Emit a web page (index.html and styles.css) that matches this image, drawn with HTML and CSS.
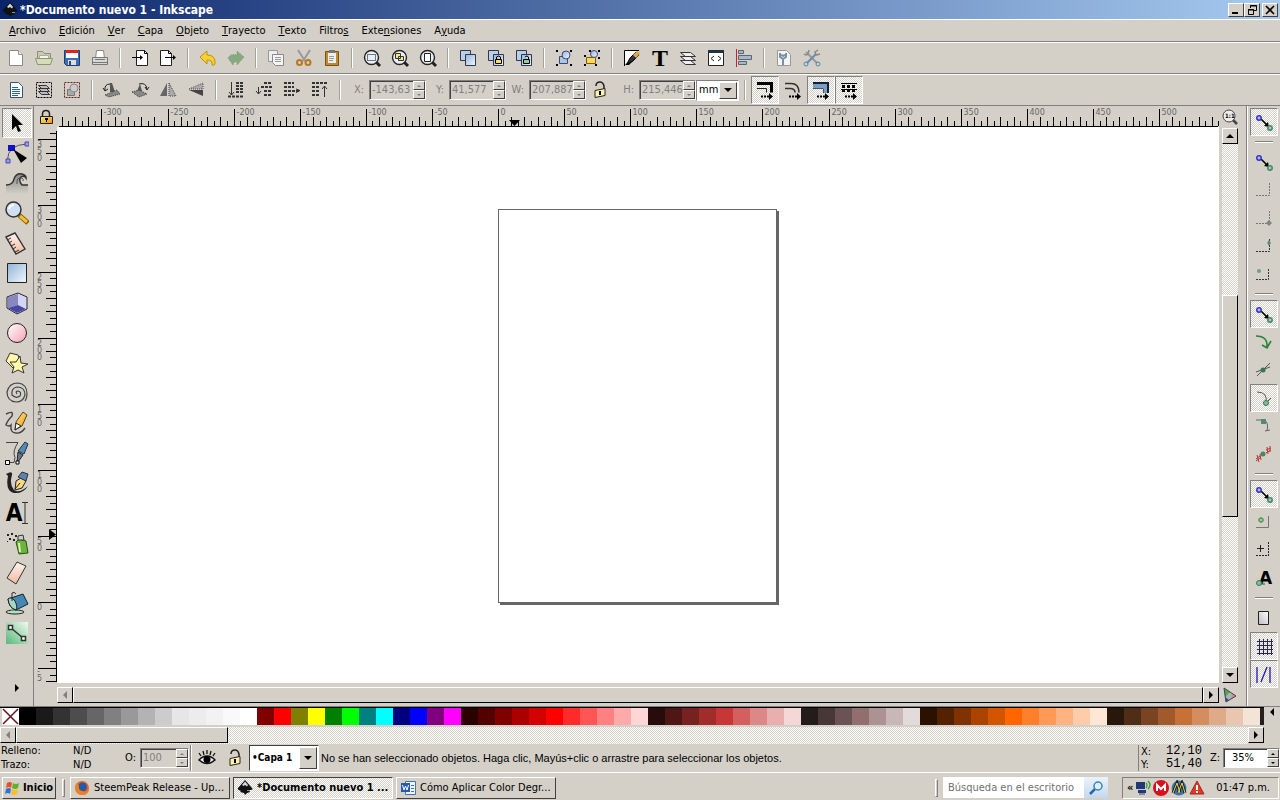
FILE: index.html
```
<!DOCTYPE html>
<html lang="es">
<head>
    <meta charset="UTF-8">
    <meta name="viewport" content="width=device-width, initial-scale=1.0">
    <title>*Documento nuevo 1 - Inkscape</title>
    <link rel="stylesheet" href="styles.css">
</head>
<body>

    <!-- shared icons -->
    <svg class="sprite" width="0" height="0">
        <defs>
            <linearGradient id="blue" x1="0" y1="0" x2="1" y2="1"><stop offset="0" stop-color="#8fb4d4"/><stop offset="1" stop-color="#f2f8ff"/></linearGradient>
            <linearGradient id="pink" x1="0" y1="0" x2="1" y2="1"><stop offset="0" stop-color="#fff"/><stop offset="1" stop-color="#f5a0b4"/></linearGradient>
            <linearGradient id="skin" x1="0" y1="0" x2="0" y2="1"><stop offset="0" stop-color="#fff4ee"/><stop offset="1" stop-color="#f0b8a0"/></linearGradient>
            <linearGradient id="green" x1="0" y1="1" x2="1" y2="0"><stop offset="0" stop-color="#58b878"/><stop offset="1" stop-color="#f0faf0"/></linearGradient>
            <linearGradient id="gold" x1="0" y1="0" x2="1" y2="1"><stop offset="0" stop-color="#fff080"/><stop offset="1" stop-color="#f08c10"/></linearGradient>
            <linearGradient id="fade" x1="0" y1="0" x2="0" y2="1"><stop offset="0" stop-color="#888"/><stop offset="1" stop-color="#d4d0c8"/></linearGradient>
            <linearGradient id="paper" x1="1" y1="0" x2="0" y2="1"><stop offset="0" stop-color="#fff"/><stop offset="1" stop-color="#bbb"/></linearGradient>
        </defs>
        <symbol id="up" viewBox="0 0 8 8"><path d="M0 6h8L4 2z"/></symbol>
        <symbol id="down" viewBox="0 0 8 8"><path d="M0 2h8L4 6z"/></symbol>
        <symbol id="left" viewBox="0 0 8 8"><path d="M6 0v8L2 4z"/></symbol>
        <symbol id="right" viewBox="0 0 8 8"><path d="M2 0v8l4-4z"/></symbol>
        <symbol id="inkscape" viewBox="0 0 16 16">
            <path d="M8 0L1 8q-1 2 3 3l-1 1 4 1 1 2 2-2 3-1-1-2q5 0 3-2z" fill="#111"/>
            <path d="M8 1.500L5 5l1.500 1L8 5l2 1.500L11 5z" fill="#cfd8e6"/>
            <path d="M10 10h3v1h-3z" fill="#8a93a0"/>
        </symbol>
        <symbol id="snap" viewBox="0 0 24 24">
            <path d="M9 9l6 6" stroke="#000" stroke-width="1.600"/><path d="M17 17l-5-1 4-4z"/>
            <circle cx="7" cy="8" r="2.200" fill="#b8b8f8" stroke="#33c" stroke-width="1.500"/>
            <circle cx="18" cy="18" r="2.200" fill="#a8c8b0" stroke="#486" stroke-width="1.500"/>
        </symbol>
        <symbol id="openlock" viewBox="0 0 24 24">
            <path d="M16 11V8q-1-4-4-4-4 0-4 4" fill="none" stroke="#222" stroke-width="1.500"/>
            <path d="M7 12.500l10-2v7l-10 2z" fill="#fff3a8" stroke="#222"/><path d="M11 13h2v4h-2z"/>
        </symbol>
        <symbol id="lens" viewBox="0 0 24 24">
            <path d="M16 16l4 4" stroke="#222" stroke-width="3"/><circle cx="11.500" cy="11.500" r="7" fill="#e8eef5" stroke="#222" stroke-width="1.400"/>
        </symbol>
        <symbol id="squares" viewBox="0 0 24 24">
            <path d="M4.500 4.500h10v10h-10z" fill="#b8d0e4" stroke="#335"/><path d="M9.500 8.500h10v11h-10z" fill="url(#blue)" stroke="#335"/>
        </symbol>
        <symbol id="dash-arrow" viewBox="0 0 24 24">
            <path d="M8 18.500h8" stroke="#000" stroke-dasharray="2 1" stroke-width="2"/><path d="M16 15l4 3.500-4 3.500z"/>
        </symbol>
    </svg>

    <header class="titlebar">
        <svg class="icon-16"><use href="#inkscape"/></svg>
        <h1>*Documento nuevo 1 - Inkscape</h1>
        <div class="window-buttons">
            <button aria-label="Minimizar"><svg width="12" height="10"><path d="M2 7h6v2H2z"/></svg></button>
            <button aria-label="Restaurar"><svg width="12" height="10" fill="none" stroke="#000"><path d="M4.500 3V.5h6v5H8M4 1h7M2.500 4.500h5v5h-5zM2 5h6"/></svg></button>
            <button class="close" aria-label="Cerrar"><svg width="12" height="10"><path d="M2 1l8 8M10 1L2 9" stroke="#000" stroke-width="1.600"/></svg></button>
        </div>
    </header>

    <nav class="menubar">
        <button><u>A</u>rchivo</button>
        <button><u>E</u>dición</button>
        <button><u>V</u>er</button>
        <button><u>C</u>apa</button>
        <button><u>O</u>bjeto</button>
        <button><u>T</u>rayecto</button>
        <button><u>T</u>exto</button>
        <button>Filtro<u>s</u></button>
        <button>Exte<u>n</u>siones</button>
        <button>A<u>y</u>uda</button>
    </nav>

    <div class="toolbar">
        <button class="tool" aria-label="Nuevo"><svg viewBox="0 0 24 24"><path d="M5.500 4.500h9l4 4v11h-13z" fill="#fff" stroke="#888"/><path d="M14.500 4.500v4h4" fill="#eee" stroke="#999"/></svg></button>
        <button class="tool" aria-label="Abrir"><svg viewBox="0 0 24 24"><path d="M5.500 18.500v-13h5l2 2h6v11z" fill="#c8ccaa" stroke="#8a9070"/><path d="M7.500 9.500h9v5h-9z" fill="#f4f4ee" stroke="#aaa"/><path d="M3.500 12.500h17l-2 6h-13z" fill="#d4dcb8" stroke="#8a9a70"/></svg></button>
        <button class="tool" aria-label="Guardar"><svg viewBox="0 0 24 24"><path d="M4.500 4.500h15v15h-13l-2-2z" fill="#3c6eb0" stroke="#1c3e70"/><path d="M6 4h12v3H6z" fill="#d22"/><path d="M6 7h12v5H6z" fill="#fff"/><path d="M8 14h8v5H8z" fill="#ddd"/><path d="M9 15h2v4H9z" fill="#347"/></svg></button>
        <button class="tool" aria-label="Imprimir"><svg viewBox="0 0 24 24"><path d="M7.500 12.500l1-8h7l1 8" fill="#fff" stroke="#888"/><path d="M4.500 11.500h15v7h-15z" fill="#d8d8d4" stroke="#777"/><path d="M7 13.500h10M5 16.500h14" stroke="#777"/></svg></button>
        <span class="sep"></span>
        <button class="tool" aria-label="Importar"><svg viewBox="0 0 24 24"><path d="M8.500 4.500h8l3 3v12h-11z" fill="#fff" stroke="#222"/><path d="M16.500 4.500v3h3M4 11.500h9" fill="none" stroke="#000"/><path d="M12 9l3 2.500-3 2.500z"/></svg></button>
        <button class="tool" aria-label="Exportar"><svg viewBox="0 0 24 24"><path d="M4.500 4.500h8l3 3v12h-11z" fill="#fff" stroke="#222"/><path d="M12.500 4.500v3h3M9 11.500h8" fill="none" stroke="#000"/><path d="M17 9l3 2.500-3 2.500z"/></svg></button>
        <span class="sep"></span>
        <button class="tool" aria-label="Deshacer"><svg viewBox="0 0 24 24"><path d="M4 11l7-6v4q9 0 8 9-1 2-3 1 1-5-5-5v4z" fill="#f4d030" stroke="#c09010"/></svg></button>
        <button class="tool" aria-label="Rehacer" disabled><svg viewBox="0 0 24 24"><path d="M20 11l-7-6v4q-6-2-9 3l5 7q1-4 4-3v3z" fill="#88a880" stroke="#7aa070" stroke-dasharray="1 1"/></svg></button>
        <span class="sep"></span>
        <button class="tool" aria-label="Copiar" disabled><svg viewBox="0 0 24 24"><path d="M4.500 4.500h9v11h-9z" fill="#eee" stroke="#999"/><path d="M8.500 8.500h11v11h-8l-3-3z" fill="#f4f4f4" stroke="#888"/><path d="M11 11.500h6M11 13.500h6M11 15.500h6" stroke="#999"/></svg></button>
        <button class="tool" aria-label="Cortar"><svg viewBox="0 0 24 24" fill="none"><path d="M6 4l7 11M18 4l-7 11" stroke="#999" stroke-width="2"/><circle cx="7.500" cy="16.500" r="2.500" stroke="#b87820" stroke-width="2"/><circle cx="16" cy="16.500" r="2.500" stroke="#b87820" stroke-width="2"/></svg></button>
        <button class="tool" aria-label="Pegar"><svg viewBox="0 0 24 24"><path d="M5.500 5.500h13v14h-13z" fill="#c08830" stroke="#805010"/><path d="M8 7h8v10H8z" fill="#eee"/><path d="M9 4h6v3H9z" fill="#777"/><path d="M9 10.500h5M9 12.500h5M9 14.500h4" stroke="#999"/></svg></button>
        <span class="sep"></span>
        <button class="tool" aria-label="Zoom a selección"><svg viewBox="0 0 24 24"><use href="#lens"/><path d="M7.500 8.500h8v6h-8z" fill="none" stroke="#000" stroke-dasharray="1 1"/></svg></button>
        <button class="tool" aria-label="Zoom a dibujo"><svg viewBox="0 0 24 24"><use href="#lens"/><path d="M7.500 7.500h5v5h-5zM10.500 10.500h5v4h-5z" fill="#f8e480" stroke="#333"/></svg></button>
        <button class="tool" aria-label="Zoom a página"><svg viewBox="0 0 24 24"><use href="#lens"/><path d="M8.500 7.500h6v8h-6z" fill="#fff" stroke="#222"/></svg></button>
        <span class="sep"></span>
        <button class="tool" aria-label="Duplicar"><svg viewBox="0 0 24 24"><use href="#squares"/></svg></button>
        <button class="tool" aria-label="Clonar"><svg viewBox="0 0 24 24"><use href="#squares"/><path d="M12.500 13v-2q2-2 4 0v2" fill="none" stroke="#000"/><path d="M11.500 13.500h6v4h-6z" fill="#fce050" stroke="#000"/></svg></button>
        <button class="tool" aria-label="Desconectar clon"><svg viewBox="0 0 24 24"><use href="#squares"/><path d="M13 11q2-2 3.500 0v2" fill="none" stroke="#000"/><path d="M11.500 13.500h6v4h-6z" fill="#9c9" stroke="#000"/></svg></button>
        <span class="sep"></span>
        <button class="tool" aria-label="Agrupar"><svg viewBox="0 0 24 24"><path d="M7.500 10.500h8v7h-8z" fill="#aac8e0" stroke="#447"/><circle cx="14" cy="9" r="4" fill="url(#blue)" stroke="#447"/><path d="M4 4h2v2H4zM18 4h2v2h-2zM4 18h2v2H4zM18 18h2v2h-2z"/></svg></button>
        <button class="tool" aria-label="Desagrupar"><svg viewBox="0 0 24 24"><path d="M6.500 11.500h9v6h-9z" fill="#fcd860" stroke="#850"/><circle cx="14" cy="8" r="3.500" fill="url(#blue)" stroke="#447"/><path d="M4 9h2v2H4zM4 18h2v2H4zM15 18h2v2h-2zM9 4h2v2H9zM18 4h2v2h-2zM18 11h2v2h-2z"/></svg></button>
        <span class="sep"></span>
        <button class="tool" aria-label="Relleno y borde"><svg viewBox="0 0 24 24"><path d="M4 4h15L4 19z" fill="#fff"/><path d="M5 19L19 6v3L9 19z"/><path d="M4.500 20V4.500H19" fill="none" stroke="#000"/><path d="M7 18l3-6 6-6 3 2-6 7z" fill="#333" stroke="#000"/><path d="M13 9l4-4 3 2-4 5z" fill="#e0a850"/></svg></button>
        <button class="tool" aria-label="Texto"><span class="letter-t">T</span></button>
        <button class="tool" aria-label="Capas"><svg viewBox="0 0 24 24" fill="#eee" stroke="#333"><path d="M4.500 14.500h10l5 4h-10zM4.500 10.500h10l5 4h-10zM4.500 6.500h10l5 4h-10z"/></svg></button>
        <button class="tool" aria-label="Editor XML"><svg viewBox="0 0 24 24"><path d="M4.500 4.500h15v15h-15z" fill="#fff" stroke="#222"/><path d="M4 4h16v3H4z" fill="#234"/><path d="M10 10l-3 2.500 3 2.500M14 10l3 2.500-3 2.500" fill="none" stroke="#222"/></svg></button>
        <button class="tool" aria-label="Alinear"><svg viewBox="0 0 24 24"><path d="M4.500 3v18" stroke="#c22"/><path d="M6.500 4.500h5v3h-5zM6.500 9.500h13v4h-13zM6.500 15.500h8v3h-8z" fill="#a8b8c8" stroke="#567"/></svg></button>
        <span class="sep"></span>
        <button class="tool" aria-label="Propiedades del documento"><svg viewBox="0 0 24 24"><path d="M5.500 4.500h9l4 4v11h-13z" fill="#f4f4f4" stroke="#999"/><path d="M8 7v4l3 2v6M14 7v4l-3 2M9 9l2 1 2-1" fill="none" stroke="#7890a8" stroke-width="2"/></svg></button>
        <button class="tool" aria-label="Preferencias"><svg viewBox="0 0 24 24" fill="none"><path d="M6 6l11 11" stroke="#999" stroke-width="2"/><path d="M16 8L7 17" stroke="#678cb0" stroke-width="2"/><path d="M18 4l-3 2 1 3 4-1" stroke="#888" stroke-width="1.500"/><circle cx="6" cy="18" r="2" stroke="#58a"/><circle cx="18" cy="18" r="2" stroke="#58a"/><path d="M4 8q4 3 5-4" stroke="#888" stroke-width="1.500"/></svg></button>
    </div>

    <div class="toolbar options">
        <button class="tool" aria-label="Seleccionar todo"><svg viewBox="0 0 24 24"><path d="M6.500 4.500h8l4 4v11h-12z" fill="#fff" stroke="#357"/><path d="M8 9.500h6M8 11.500h8M8 13.500h8M8 15.500h8M8 17.500h6" stroke="#2860b0"/></svg></button>
        <button class="tool" aria-label="Seleccionar en capas"><svg viewBox="0 0 24 24"><path d="M4.500 4.500h15v15h-15z" fill="none" stroke="#000" stroke-dasharray="2 1"/><path d="M6.500 13.500h8l3 3h-8zM6.500 10.500h8l3 3h-8zM6.500 7.500h8l3 3h-8z" fill="#bbb" stroke="#333"/></svg></button>
        <button class="tool" aria-label="Deseleccionar" disabled><svg viewBox="0 0 24 24"><path d="M4.500 4.500h15v15h-15z" fill="none" stroke="#622" stroke-dasharray="2 1"/><path d="M7.500 11.500h7v6h-7z" fill="#aaa" stroke="#777"/><circle cx="14" cy="10" r="4" fill="#ccc" stroke="#888"/></svg></button>
        <span class="sep"></span>
        <button class="tool" aria-label="Rotar a la izquierda" disabled><svg viewBox="0 0 24 24"><path d="M5 13q-1-7 5-7M3 10l2 3 3-2" fill="none" stroke="#222"/><path d="M10 5l2 0 3 9h-5z" fill="#555"/><path d="M5 17l12-5 3 4-11 3z" fill="#888" stroke="#333" stroke-dasharray="1 1"/></svg></button>
        <button class="tool" aria-label="Rotar a la derecha" disabled><svg viewBox="0 0 24 24"><path d="M11 6q7-2 8 5M17 9l2 3 2-3" fill="none" stroke="#222"/><path d="M12 6L9 13h5z" fill="#555"/><path d="M4 14l7-2 8 4-8 3z" fill="#888" stroke="#333" stroke-dasharray="1 1"/></svg></button>
        <button class="tool" aria-label="Reflejar horizontal" disabled><svg viewBox="0 0 24 24"><path d="M11 5v13H4z" fill="#666"/><path d="M13 5v13h7z" fill="#aaa" stroke="#444" stroke-dasharray="1 1"/></svg></button>
        <button class="tool" aria-label="Reflejar vertical" disabled><svg viewBox="0 0 24 24"><path d="M5 11h14V5z" fill="#aaa" stroke="#555" stroke-dasharray="1 1"/><path d="M5 12h14v6z" fill="#444"/></svg></button>
        <span class="sep"></span>
        <button class="tool" aria-label="Bajar al fondo" disabled><svg viewBox="0 0 24 24" fill="none" stroke="#333"><path d="M7.500 4v13M5 14l2.500 3 2.500-3"/><path d="M12 5h8M12 8h8M12 11h8M12 14h8M4 18.500h16" stroke-width="2" stroke-dasharray="3 1"/></svg></button>
        <button class="tool" aria-label="Bajar" disabled><svg viewBox="0 0 24 24" fill="none" stroke="#333"><path d="M6.500 9v7M4 13l2.500 3 2.500-3"/><path d="M12 5h8M9 9h11M12 13h8M12 17h8" stroke-width="2" stroke-dasharray="3 1"/></svg></button>
        <button class="tool" aria-label="Elevar" disabled><svg viewBox="0 0 24 24" fill="none" stroke="#333"><path d="M16 11l4 1.500-4 2"/><path d="M4 5h10M4 9h10M4 13h15M4 17h10" stroke-width="2" stroke-dasharray="3 1"/></svg></button>
        <button class="tool" aria-label="Elevar al frente" disabled><svg viewBox="0 0 24 24" fill="none" stroke="#333"><path d="M16.500 19V8M14 11l2.500-3 2.500 3"/><path d="M4 5h16M4 9h8M4 13h8M4 17h8" stroke-width="2" stroke-dasharray="3 1"/></svg></button>
        <span class="sep"></span>

        <div class="field off">
            <label for="pos-x">X:</label>
            <div class="spin"><input id="pos-x" type="text" value="-143,63" disabled><span class="arrows"><button disabled aria-label="Más"><svg><use href="#up"/></svg></button><button disabled aria-label="Menos"><svg><use href="#down"/></svg></button></span></div>
        </div>
        <div class="field off">
            <label for="pos-y">Y:</label>
            <div class="spin"><input id="pos-y" type="text" value="41,577" disabled><span class="arrows"><button disabled aria-label="Más"><svg><use href="#up"/></svg></button><button disabled aria-label="Menos"><svg><use href="#down"/></svg></button></span></div>
        </div>
        <div class="field off">
            <label for="width">W:</label>
            <div class="spin"><input id="width" type="text" value="207,887" disabled><span class="arrows"><button disabled aria-label="Más"><svg><use href="#up"/></svg></button><button disabled aria-label="Menos"><svg><use href="#down"/></svg></button></span></div>
        </div>
        <button class="tool" aria-label="Bloquear proporción"><svg viewBox="0 0 24 24"><use href="#openlock"/></svg></button>
        <div class="field off last">
            <label for="height">H:</label>
            <div class="spin"><input id="height" type="text" value="215,446" disabled><span class="arrows"><button disabled aria-label="Más"><svg><use href="#up"/></svg></button><button disabled aria-label="Menos"><svg><use href="#down"/></svg></button></span></div>
        </div>
        <div class="combo units">
            <select aria-label="Unidad"><option>mm</option><option>px</option></select>
            <span class="combo-arrow"><svg><use href="#down"/></svg></span>
        </div>
        <span class="sep"></span>
        <button class="tool pressed" aria-label="Escalar borde"><svg viewBox="0 0 24 24"><path d="M4 5.500h14.500v9" fill="none" stroke="#000" stroke-width="3"/><path d="M4 10.500h9.500v4" fill="none" stroke="#222"/><use href="#dash-arrow"/></svg></button>
        <button class="tool" aria-label="Escalar esquinas"><svg viewBox="0 0 24 24"><path d="M4 5.500h6q8 0 8 9M4 10.500h5q5 0 5 4" fill="none" stroke="#333" stroke-width="1.600"/><use href="#dash-arrow"/></svg></button>
        <button class="tool pressed" aria-label="Mover degradados"><svg viewBox="0 0 24 24"><path d="M4 5h16v10h-5v-5H4z" fill="#7c9cc4"/><path d="M4 5h15v10" fill="none" stroke="#123" stroke-width="2"/><path d="M4 10.500h10.500V15" fill="none" stroke="#456"/><use href="#dash-arrow"/></svg></button>
        <button class="tool pressed" aria-label="Mover patrones"><svg viewBox="0 0 24 24"><path d="M4 5.500h16M4 11.500h16" stroke="#000"/><path d="M5 8.500h15M5 12.500h15" stroke="#000" stroke-width="3" stroke-dasharray="3 2"/><use href="#dash-arrow"/></svg></button>
    </div>

    <main class="workspace">
        <div class="toolbox">
            <button class="pressed" aria-label="Seleccionar"><svg viewBox="0 0 24 24"><path d="M7 3v16l4-4 2 6 3-1-3-6h5z"/></svg></button>
            <button aria-label="Nodos"><svg viewBox="0 0 24 24"><path d="M2.500 19q0-15 19-16" fill="none" stroke="#555"/><path d="M1 18h4v4H1zM20 1h4v4h-4z" fill="#99f" stroke="#44a"/><path d="M3 4h7v6H3z" fill="#11c"/><path d="M8 8l14 9-6 5z"/></svg></button>
            <button aria-label="Retocar"><svg viewBox="0 0 24 24"><path d="M1 14q7 0 8-6 2-6 8-5 4 1 4 4-2-3-5-1-3 3 1 8h6v9H1z" fill="url(#fade)"/><path d="M1 14q7 0 8-6 2-6 8-5 4 1 4 4-2-3-5-1-3 3 1 8h6" fill="none" stroke="#333" stroke-width="1.500"/><path d="M12 13q-1-7 5-6 2 1 1 3" fill="none" stroke="#555"/></svg></button>
            <button aria-label="Zoom"><svg viewBox="0 0 24 24"><path d="M14 14l9 8" stroke="#8a5a00" stroke-width="5"/><path d="M15 15l7 6" stroke="#f4c030" stroke-width="3"/><circle cx="8.500" cy="8.500" r="7.500" fill="#cfe0f2" stroke="#333" stroke-width="1.500"/><path d="M4 8q1-4 5-4" stroke="#fff" fill="none" stroke-width="2"/></svg></button>
            <button aria-label="Medir"><svg viewBox="0 0 24 24"><path d="M1 6l9-4 10 16-9 5z" fill="url(#skin)" stroke="#333" stroke-width="1.400"/><path d="M2 9l4-2M4 12l3-2M6 15l4-2M8 18l3-2M10 21l4-2" stroke="#333"/></svg></button>
            <button aria-label="Rectángulo"><svg viewBox="0 0 24 24"><path d="M2.500 2.500h19v19h-19z" fill="url(#blue)" stroke="#222"/></svg></button>
            <button aria-label="Caja 3D"><svg viewBox="0 0 24 24"><path d="M2 6l11-4 9 4v12l-10 5-10-6z" fill="#e0e0f8" stroke="#223"/><path d="M3 6l10-3v11L3 17z" fill="#8888c0"/><path d="M13 3l8 4v10l-8-3z" fill="#d4d4f4"/><path d="M3 17l10-3 8 4-9 4z" fill="#4848a0"/></svg></button>
            <button aria-label="Elipse"><svg viewBox="0 0 24 24"><circle cx="12" cy="12" r="9.500" fill="url(#pink)" stroke="#222"/></svg></button>
            <button aria-label="Estrella"><svg viewBox="0 0 24 24" stroke="#333" fill="#fff8a8"><path d="M1 10l4-8 8 2 3 9-8 4z"/><path d="M15 5l1 7 7 1-6 3 2 6-6-3-6 3 2-6-4-5 6 0z"/></svg></button>
            <button aria-label="Espiral"><svg viewBox="0 0 24 24"><path d="M12 13q-2-3 1-3 4 1 2 5-4 3-8-1-1-7 5-8 8 0 8 8-2 7-9 7-9-1-9-10Q4 2 13 2q9 1 9 11 0 4-2 7" fill="none" stroke="#444" stroke-width="1.200"/></svg></button>
            <button aria-label="Lápiz"><svg viewBox="0 0 24 24"><path d="M1 3q8-4 6 2-5 5-6 9 3 2 5 0-1 8 5 8 5 1 9-5" fill="none" stroke="#444" stroke-width="1.400"/><path d="M10 19l1-8 7-10 4 3-5 11z" fill="url(#gold)" stroke="#542"/><path d="M10 19l1-7 5 3z" fill="#fff" stroke="#222"/></svg></button>
            <button aria-label="Pluma"><svg viewBox="0 0 24 24"><path d="M1 1.500h12q-6 9-3 15l-1 5H2" fill="none" stroke="#444"/><path d="M13 10l7-9 3 2-4 10z" fill="#5888b8" stroke="#234"/><path d="M13 11l5 3-5 7h-1z" fill="#678" stroke="#222"/><path d="M.5 19.500h4v4h-4zM11 20h3v3h-3z" fill="#fff" stroke="#000"/></svg></button>
            <button aria-label="Caligrafía"><svg viewBox="0 0 24 24"><path d="M1 3q7-4 6 1-3 9 2 15 5 4 14-4-5 8-14 7Q0 20 3 5z" fill="#222"/><path d="M10 19l1-9 5-3 5 3-4 7z" fill="#f8d880" stroke="#222"/><path d="M13 6l4-5 6 2-2 7z" fill="#6080a8" stroke="#234"/><path d="M10 18l5-6" stroke="#222"/></svg></button>
            <button aria-label="Texto"><span class="letter-a">A</span><svg class="caret" viewBox="0 0 6 24"><path d="M0 1.500h6M0 22.500h6M3 1v22" stroke="#333" fill="none"/></svg></button>
            <button aria-label="Spray"><svg viewBox="0 0 24 24"><path d="M2 3h2v2H2zM6 2h2v2H6zM10 4h2v2h-2zM4 7h2v2H4zM8 8h2v2H8zM2 10h1v1H2z" fill="#222"/><path d="M11 11l3-3 7 2 2 12-9 1z" fill="#6eb43c" stroke="#285010"/><path d="M13 5l5-1 1 5h-6z" fill="#ccc" stroke="#333"/><path d="M14 12l1 9" stroke="#d4f4a8" stroke-width="2"/></svg></button>
            <button aria-label="Borrador"><svg viewBox="0 0 24 24"><path d="M2 17L12 1l9 4-10 18z" fill="url(#skin)" stroke="#333"/></svg></button>
            <button aria-label="Cubo de pintura"><svg viewBox="0 0 24 24"><ellipse cx="10" cy="21" rx="9" ry="2" fill="#b8e0b8" stroke="#222"/><path d="M7 8v12M9 11v9" stroke="#7ab898"/><path d="M3 8l15-5 5 10-12 6q-7-2-8-11z" fill="#4888b0" stroke="#123"/><path d="M3 8q3-3 7 2 3 6 1 9-7-2-8-11z" fill="#a8d8c0" stroke="#123"/><path d="M7 10V2q2-2 4 1" stroke="#333" fill="none"/></svg></button>
            <button aria-label="Conector"><svg viewBox="0 0 24 24"><path d="M1 1h22v22H1z" fill="url(#green)"/><path d="M6 7l12 10" stroke="#333" stroke-width="1.500"/><path d="M3.500 4.500h4v4h-4zM16.500 15.500h4v4h-4z" fill="#fff" stroke="#333" stroke-width="1.500"/></svg></button>
            <button class="more" aria-label="Más herramientas"><svg><use href="#right"/></svg></button>
        </div>

        <div class="editor">
            <button class="corner" aria-label="Bloquear guías"><svg viewBox="0 0 16 16"><path d="M4.500 8V5q0-3.500 3.500-3.500T11.500 5v3" fill="none" stroke="#222" stroke-width="1.500"/><path d="M2.500 7.500h12v7h-12z" fill="url(#gold)" stroke="#222"/><path d="M7 9h3v2H9v2H8v-2H7z"/></svg></button>
            <svg class="ruler-h" id="ruler-h"></svg>
            <button class="corner" aria-label="Zoom 1:1"><svg viewBox="0 0 16 16"><path d="M11 11l4 4" stroke="#444" stroke-width="2.500"/><circle cx="7" cy="7" r="6" fill="#eee" stroke="#444"/><text x="3" y="9" class="one">1:1</text></svg></button>

            <svg class="ruler-v" id="ruler-v"></svg>
            <div class="canvas"><div class="page"></div></div>
            <div class="scroll-v">
                <button aria-label="Arriba"><svg><use href="#up"/></svg></button>
                <div class="track"><div class="thumb"></div></div>
                <button aria-label="Abajo"><svg><use href="#down"/></svg></button>
            </div>

            <span></span>
            <div class="scroll-h">
                <button disabled aria-label="Izquierda"><svg><use href="#left"/></svg></button>
                <div class="thumb"></div>
                <button aria-label="Derecha"><svg><use href="#right"/></svg></button>
            </div>
            <button class="corner" aria-label="Gestión de color"><svg viewBox="0 0 16 16"><path d="M2 1l12 8-10 6z" fill="#a8b8a8"/><path d="M2 1l6 4-5 5z" fill="#4aa85a"/><path d="M10 6l4 3-5 3z" fill="#d88"/><path d="M3 10l4 3-3 2z" fill="#44a"/><path d="M2 1l12 8-10 6z" fill="none" stroke="#445"/></svg></button>
        </div>

        <div class="snapbar">
            <button class="tool pressed" aria-label="Activar ajuste"><svg viewBox="0 0 24 24"><use href="#snap"/></svg></button>
            <span class="hsep"></span>
            <button class="tool" aria-label="Ajustar cajas"><svg viewBox="0 0 24 24"><use href="#snap"/></svg></button>
            <button class="tool" disabled aria-label="Bordes de caja"><svg viewBox="0 0 24 24"><path d="M4 17.500h13.500V5" fill="none" stroke="#777" stroke-dasharray="2 1"/></svg></button>
            <button class="tool" disabled aria-label="Esquinas de caja"><svg viewBox="0 0 24 24"><path d="M4 17.500h13.500V5" fill="none" stroke="#777" stroke-dasharray="2 1"/><path d="M17 14l3 3-3 3-3-3z" fill="#788"/></svg></button>
            <button class="tool" disabled aria-label="Medios de borde"><svg viewBox="0 0 24 24"><path d="M4 17.500h13.500V5" fill="none" stroke="#333" stroke-dasharray="2 1"/><path d="M17 6l2 3-2 3-2-3z" fill="#687"/></svg></button>
            <button class="tool" disabled aria-label="Centros de caja"><svg viewBox="0 0 24 24"><path d="M4 17.500h12.500V6" fill="none" stroke="#333" stroke-dasharray="2 1"/><circle cx="7" cy="9" r="2" fill="#798"/></svg></button>
            <span class="hsep"></span>
            <button class="tool pressed" aria-label="Ajustar nodos"><svg viewBox="0 0 24 24"><use href="#snap"/></svg></button>
            <button class="tool" aria-label="Ajustar a trayectos"><svg viewBox="0 0 24 24"><path d="M4 6q12 0 11 11M10 15l5 3 4-7" fill="none" stroke="#2a8238" stroke-width="1.600"/></svg></button>
            <button class="tool" aria-label="Intersecciones"><svg viewBox="0 0 24 24"><path d="M4 14l14-5M5 18L18 5" stroke="#555" fill="none"/><circle cx="11" cy="12" r="2.500" fill="#375"/></svg></button>
            <button class="tool pressed" aria-label="Nodos cúspide"><svg viewBox="0 0 24 24"><path d="M5 6q11 0 9 11M13 18l6-6" fill="none" stroke="#555"/><circle cx="14" cy="17" r="2.500" fill="#8b9" stroke="#375"/></svg></button>
            <button class="tool" aria-label="Nodos suaves"><svg viewBox="0 0 24 24"><path d="M4 6h8q5 2 3 11M13 17l5-1" fill="none" stroke="#666"/><path d="M9 5h5v5H9z" fill="#587"/></svg></button>
            <button class="tool" aria-label="Medios de línea"><svg viewBox="0 0 24 24"><path d="M4 17l4-3M4 19l5-4M5 13l2 7M8 12l1 6M14 8l5-2M14 11l5-3M15 5l1 7M18 4v6" stroke="#b33"/><circle cx="11" cy="12" r="2.500" fill="#486"/></svg></button>
            <span class="hsep"></span>
            <button class="tool pressed" aria-label="Ajustar otros"><svg viewBox="0 0 24 24"><use href="#snap"/></svg></button>
            <button class="tool" aria-label="Centro de objeto"><svg viewBox="0 0 24 24"><path d="M4 17.500h12.500V6" fill="none" stroke="#777"/><circle cx="9" cy="10" r="2.200" fill="#9c9" stroke="#373"/></svg></button>
            <button class="tool" aria-label="Centro de rotación"><svg viewBox="0 0 24 24"><path d="M4 17.500h13M16.500 4v13" fill="none" stroke="#222" stroke-dasharray="2 1"/><path d="M5 10.500h7M8.500 7v7" stroke="#222"/></svg></button>
            <button class="tool" aria-label="Línea base de texto"><svg viewBox="0 0 24 24"><path d="M5 18h8" stroke="#486" stroke-width="1.500"/><text x="7" y="18" class="letter-snap">A</text><circle cx="7" cy="17" r="2.500" fill="#8b9" stroke="#375"/></svg></button>
            <span class="hsep"></span>
            <button class="tool" aria-label="Borde de página"><svg viewBox="0 0 24 24"><path d="M6.500 5.500h10v13h-10z" fill="url(#paper)" stroke="#222"/></svg></button>
            <button class="tool pressed" aria-label="Rejilla"><svg viewBox="0 0 24 24"><path d="M5 7.500h16M5 11.500h16M5 15.500h16M5 19.500h16M7.500 5v16M11.500 5v16M15.500 5v16M19.500 5v16" stroke="#1818c8"/></svg></button>
            <button class="tool pressed" aria-label="Guías"><svg viewBox="0 0 24 24"><path d="M5 5v16M18 5v16M9 20l6-15" stroke="#1818c8" fill="none" stroke-width="1.300"/></svg></button>
        </div>
    </main>

    <div class="palette">
        <div class="swatches" id="swatches">
            <button class="swatch none" aria-label="Ninguno"><svg viewBox="0 0 17 17"><path d="M1 1l15 15M16 1L1 16" stroke="#701020" stroke-width="1.500"/></svg></button>
        </div>
        <button class="palette-menu" aria-label="Paletas"><svg><use href="#left"/></svg></button>
        <div class="scroll-h">
            <button disabled aria-label="Izquierda"><svg><use href="#left"/></svg></button>
            <div class="track"><div class="thumb"></div></div>
            <button aria-label="Derecha"><svg><use href="#right"/></svg></button>
        </div>
    </div>

    <footer class="statusbar">
        <dl class="style">
            <dt>Relleno:</dt><dd>N/D</dd>
            <dt>Trazo:</dt><dd>N/D</dd>
        </dl>
        <div class="field opacity">
            <label for="opacity">O:</label>
            <div class="spin off"><input id="opacity" type="text" value="100" disabled><span class="arrows"><button disabled aria-label="Más"><svg><use href="#up"/></svg></button><button disabled aria-label="Menos"><svg><use href="#down"/></svg></button></span></div>
        </div>
        <span class="vline"></span>
        <button class="tool" aria-label="Visibilidad de capa"><svg viewBox="0 0 24 24"><path d="M4 14q8-8 16 0-8 7-16 0z" fill="#eee" stroke="#111" stroke-width="1.500"/><circle cx="12" cy="13.500" r="3.500"/><path d="M6 10L4 7M9 9L8 5M12 8V4M15 9l1-4M18 10l2-3" stroke="#111" stroke-width="1.300"/></svg></button>
        <button class="tool" aria-label="Bloqueo de capa"><svg viewBox="0 0 24 24"><use href="#openlock"/></svg></button>
        <div class="combo layer">
            <select aria-label="Capa actual"><option>•Capa 1</option></select>
            <span class="combo-arrow"><svg><use href="#down"/></svg></span>
        </div>
        <p class="message">No se han seleccionado objetos. Haga clic, Mayús+clic o arrastre para seleccionar los objetos.</p>
        <dl class="coords">
            <dt>X:</dt><dd>12,10</dd>
            <dt>Y:</dt><dd>51,40</dd>
        </dl>
        <div class="field zoom">
            <label for="zoom">Z:</label>
            <div class="spin"><input id="zoom" type="text" value="35%"><span class="arrows"><button aria-label="Más"><svg><use href="#up"/></svg></button><button aria-label="Menos"><svg><use href="#down"/></svg></button></span></div>
        </div>
    </footer>

    <div class="taskbar">
        <button class="start"><svg viewBox="0 0 16 16"><path d="M2 3q3-2 5 0L6 8Q4 6 1 8z" fill="#e85020"/><path d="M8 3q3 2 6 0l-1 5q-3 2-6 0z" fill="#60b030"/><path d="M1 9q3-2 5 0l-1 5q-2-2-5 0z" fill="#3070d8"/><path d="M7 9q3 2 6 0l-1 5q-3 2-6 0z" fill="#f8c020"/></svg>Inicio</button>
        <span class="grip"></span>
        <button class="task"><svg viewBox="0 0 16 16"><circle cx="8" cy="8" r="7" fill="#e86818"/><circle cx="8.500" cy="7" r="4.500" fill="#2858a8"/><path d="M1 6q0 9 8 9 5 0 6-6-3 4-7 2-4-1-3-5l-2-3z" fill="#f08020"/></svg><span>SteemPeak Release - Up...</span></button>
        <button class="task active"><svg><use href="#inkscape"/></svg><span>*Documento nuevo 1 ...</span></button>
        <button class="task"><svg viewBox="0 0 16 16"><path d="M5.500 1.500h10v13h-10z" fill="#eef4ff" stroke="#4470b8"/><path d="M1 3h9v9H1z" fill="#2858b0"/><path d="M2.500 5l1.500 5 1.500-4L7 10l1.500-5" fill="none" stroke="#fff"/><path d="M11 5.500h3M11 8.500h3M11 11.500h3" stroke="#4470b8"/></svg><span>Cómo Aplicar Color Degr...</span></button>
        <div class="search">
            <span class="grip"></span>
            <input type="text" aria-label="Buscar" placeholder="Búsqueda en el escritorio">
            <button aria-label="Buscar"><svg viewBox="0 0 16 16"><path d="M7 9l-5 5" stroke="#2868a8" stroke-width="2.500"/><circle cx="10" cy="6" r="4" fill="#dcf0ff" stroke="#3c80c0" stroke-width="1.500"/></svg></button>
        </div>
        <div class="tray">
            <span class="chevron">«</span>
            <svg viewBox="0 0 16 16"><path d="M1 2h9v7H1zM3 10h8v3H3z" fill="#203878"/><path d="M4 13h6v2H4z" fill="#889"/><path d="M11 3q2 2 0 5M13 1q4 4 0 8" fill="none" stroke="#30a030" stroke-width="1.300"/></svg>
            <svg viewBox="0 0 16 16"><circle cx="8" cy="8" r="8" fill="#d81020"/><path d="M4 11V5l4 4 4-4v6" fill="none" stroke="#fff" stroke-width="2"/></svg>
            <svg viewBox="0 0 16 16"><circle cx="8" cy="8" r="7.500" fill="#3c78b8"/><path d="M2 13L6 3l3 10M7 13l4-10 3 10" fill="none" stroke="#222" stroke-width="3"/><path d="M2 13L6 3l3 10M7 13l4-10 3 10" fill="none" stroke="#e8d860"/></svg>
            <svg viewBox="0 0 16 16"><path d="M8 1l7 13H1z" fill="#e03828" stroke="#a82818"/><path d="M7 5h2v5H7zM7 11h2v2H7z" fill="#fff"/></svg>
            <time>01:47 p.m.</time>
        </div>
    </div>

    <script>
        const NS = "http://www.w3.org/2000/svg";
        const STEP = 6.61; // pixels per 5 mm

        const colors = ("000 1a1a1a 333 4d4d4d 666 808080 999 b3b3b3 ccc e6e6e6 ececec f2f2f2 f9f9f9 fff " +
            "800000 f00 808000 ff0 008000 0f0 008080 0ff 000080 00f 800080 f0f " +
            "2b0000 550000 800000 a00 d40000 f00 ff2a2a f55 ff8080 faa ffd5d5 " +
            "280b0b 501616 782121 a02c2c c83737 d35f5f de8787 e9afaf f4d7d7 " +
            "241c1c 483737 6c5353 916f6f ac9393 c8b7b7 e3dbdb " +
            "2b1100 520 803300 a40 d45500 f60 ff7f2a f95 ffb380 fca ffe6d5 " +
            "28170b 502d16 784421 a05a2c c87137 d38d5f deaa87 e9c6af f4e3d7 " +
            "241f1c 483e37 6c5d53 917c6f").split(" ");

        function add(parent, name, attrs, text) {
            const el = document.createElementNS(NS, name);
            for (const key in attrs) el.setAttribute(key, attrs[key]);
            if (text) el.textContent = text;
            parent.appendChild(el);
        }

        function tickSize(i) {
            if (i % 10 === 0) return 17;
            return i % 2 === 0 ? 9 : 5;
        }

        function drawTopRuler() {
            const ruler = document.getElementById("ruler-h");
            const width = ruler.clientWidth;
            const origin = 441;
            let d = `M2 20.5H${width - 1}`;
            for (let i = -66; origin + i * STEP < width; i++) {
                const x = Math.round(origin + i * STEP) + 0.5;
                d += `M${x} 20v-${tickSize(i)}`;
                if (i % 10 === 0) add(ruler, "text", { x: x + 2, y: 9 }, String(i * 5));
            }
            add(ruler, "path", { d: d, class: "ticks" });
            add(ruler, "path", { d: "M452 14h11l-5.500 6z" });
        }

        function drawSideRuler() {
            const ruler = document.getElementById("ruler-v");
            const height = ruler.clientHeight;
            const origin = 475;
            let d = `M22.5 4V${height - 1}`;
            for (let i = -15; origin - i * STEP > 4; i++) {
                const y = Math.round(origin - i * STEP) + 0.5;
                if (y > height) continue;
                d += `M22 ${y}h-${tickSize(i) + 1}`;
                if (i % 10 !== 0) continue;
                // digits are stacked, leave out those below the edge
                String(i * 5).split("").forEach((c, n) => {
                    const base = y + 7 + n * 7 - (i < 0 ? 2 : 0);
                    if (base < height) add(ruler, "text", { x: 3, y: base }, c);
                });
            }
            add(ruler, "path", { d: d, class: "ticks" });
            add(ruler, "path", { d: "M15 402v11l7-5.500z" });
        }

        function fillPalette() {
            const box = document.getElementById("swatches");
            colors.forEach(c => {
                const b = document.createElement("button");
                b.className = "swatch";
                b.style.backgroundColor = "#" + c;
                b.setAttribute("aria-label", "#" + c);
                box.appendChild(b);
            });
        }

        drawTopRuler();
        drawSideRuler();
        fillPalette();
    </script>

</body>
</html>
```
FILE: styles.css
```
* {
    box-sizing: border-box;
}

body {
    margin: 0;
    height: 100vh;
    display: flex;
    flex-direction: column;
    overflow: hidden;
    background: #d4d0c8;
    color: #000;
    font-family: 'DejaVu Sans Condensed', 'DejaVu Sans', sans-serif;
    font-size: 11px;
    line-height: 14px;
}

button, input, select {
    font: inherit;
    color: inherit;
    margin: 0;
    padding: 0;
    border: 0;
    border-radius: 0;
    background: none;
}

button {
    display: flex;
    align-items: center;
    justify-content: center;
    flex: none;
}

svg {
    display: block;
    flex: none;
}

dl, dd, p, h1 {
    margin: 0;
}

.sprite {
    position: absolute;
}

.icon-16 {
    width: 16px;
    height: 16px;
}

/* title bar */

.titlebar {
    display: flex;
    align-items: center;
    height: 19px;
    padding: 0 2px;
    gap: 2px;
    background: linear-gradient(to right, #0a246a, #a6caf0);
    color: #fff;
}

.titlebar h1 {
    flex: 1;
    font-size: 12px;
    font-weight: bold;
}

.window-buttons {
    display: flex;
}

.window-buttons button {
    width: 16px;
    height: 14px;
    background: #d4d0c8;
    border: 1px solid;
    border-color: #fff #404040 #404040 #fff;
}

.window-buttons .close {
    margin-left: 2px;
}

/* menu and toolbars */

.menubar {
    display: flex;
    align-items: center;
    height: 23px;
    padding-left: 3px;
    border-top: 1px solid #fff;
    border-bottom: 1px solid #808080;
}

.menubar button {
    padding: 0 7px 0 6px;
    height: 20px;
}

.toolbar {
    display: flex;
    align-items: center;
    height: 32px;
    padding-left: 2px;
    border-top: 1px solid #fff;
    border-bottom: 1px solid #808080;
}

.tool {
    width: 28px;
    height: 28px;
}

.tool svg {
    width: 24px;
    height: 24px;
}

.pressed {
    border: 1px solid;
    border-color: #808080 #fff #fff #808080;
}

.pressed, .track, .task.active {
    background: repeating-conic-gradient(#d4d0c8 0 25%, #fff 0 50%) 0 0 / 2px 2px;
}

.sep {
    width: 2px;
    height: 20px;
    margin: 0 5px;
    border-left: 1px solid #a5a29a;
    border-right: 1px solid #fff;
}

.letter-t {
    font-family: 'Liberation Serif', serif;
    font-weight: bold;
    font-size: 24px;
    line-height: 24px;
}

.field {
    display: flex;
    align-items: center;
    justify-content: flex-end;
    width: 80px;
    gap: 5px;
}

.options .field {
    color: #808080;
}

.options .field.last {
    width: 82px;
}

.spin {
    display: flex;
    width: 57px;
    height: 20px;
    border: 1px solid;
    border-color: #808080 #fff #fff #808080;
    box-shadow: inset 1px 1px #404040;
}

.spin input {
    flex: 1;
    min-width: 0;
    padding-left: 2px;
    color: #808080;
    background: transparent;
}

.arrows {
    display: flex;
    flex-direction: column;
    width: 12px;
}

.arrows button {
    flex: 1;
    border: 1px solid;
    border-color: #fff #404040 #404040 #fff;
    background: #d4d0c8;
}

.arrows svg {
    width: 4px;
    height: 4px;
}

button:disabled use {
    fill: #808080;
}

.combo {
    display: grid;
    grid-template-columns: 1fr 18px;
    height: 21px;
    padding: 1px;
    background: #fff;
    border: 1px solid;
    border-color: #808080 #fff #fff #808080;
}

.combo select {
    grid-area: 1 / 1 / 2 / 3;
    appearance: none;
    padding-left: 1px;
}

.combo-arrow {
    grid-area: 1 / 2;
    display: flex;
    align-items: center;
    justify-content: center;
    background: #d4d0c8;
    border: 1px solid;
    border-color: #fff #404040 #404040 #fff;
    pointer-events: none;
}

.combo-arrow svg {
    width: 8px;
    height: 8px;
}

.units {
    width: 43px;
}

/* workspace */

.workspace {
    flex: 1;
    min-height: 0;
    display: flex;
}

.toolbox {
    width: 34px;
    padding: 2px 0 0 1px;
    border-right: 1px solid #808080;
    display: flex;
    flex-direction: column;
    align-items: center;
}

.toolbox button {
    width: 30px;
    height: 30px;
}

.toolbox svg {
    width: 24px;
    height: 24px;
}

.toolbox .more {
    margin-top: auto;
    margin-bottom: 3px;
}

.toolbox .more svg {
    width: 8px;
    height: 8px;
}

.letter-a {
    font-weight: bold;
    font-size: 24px;
    line-height: 24px;
}

.toolbox .caret {
    width: 6px;
}

.editor {
    flex: 1;
    min-width: 0;
    display: grid;
    grid-template-columns: 23px 1fr 22px;
    grid-template-rows: 21px 1fr 23px;
    padding-right: 6px;
}

.corner svg {
    width: 16px;
    height: 16px;
}

.one {
    font-size: 6px;
    font-weight: bold;
}

.ruler-h, .ruler-v {
    width: 100%;
    height: 100%;
    overflow: hidden;
    font-family: 'DejaVu Sans', sans-serif;
    font-size: 8px;
}

.ruler-h text, .ruler-v text {
    fill: #666;
}

.ticks {
    fill: none;
    stroke: #000;
    shape-rendering: crispEdges;
}

.canvas {
    position: relative;
    overflow: hidden;
    background: #fff;
}

.page {
    position: absolute;
    left: 441px;
    top: 82px;
    width: 279px;
    height: 394px;
    background: #fff;
    border: 1px solid #666;
    box-shadow: 2px 2px #666;
}

.scroll-v, .scroll-h {
    display: flex;
}

.scroll-v {
    flex-direction: column;
    width: 16px;
    margin: 1px auto 0;
}

.scroll-v button, .scroll-h button, .thumb {
    background: #d4d0c8;
    border: 1px solid;
    border-color: #fff #000 #000 #fff;
}

.scroll-v button, .scroll-h button {
    width: 16px;
    height: 16px;
}

.scroll-v svg, .scroll-h svg, .palette-menu svg {
    width: 8px;
    height: 8px;
}

.track {
    flex: 1;
    min-width: 0;
}

.scroll-v .track {
    padding-top: 151px;
}

.scroll-v .thumb {
    height: 222px;
}

.editor .scroll-h {
    margin: 4px 0 3px;
}

.editor .scroll-h .thumb {
    flex: 1;
}

.snapbar {
    width: 33px;
    padding: 2px 0 0 2px;
    border-left: 1px solid #fff;
    box-shadow: -1px 0 #808080;
}

.hsep {
    display: block;
    height: 2px;
    width: 18px;
    margin: 5px;
    border-top: 1px solid #808080;
    border-bottom: 1px solid #fff;
}

.letter-snap {
    font-family: 'DejaVu Sans', sans-serif;
    font-weight: bold;
    font-size: 17px;
}

/* palette */

.palette {
    display: grid;
    grid-template-columns: 1fr 16px;
    grid-template-rows: 20px 17px;
    border-top: 1px solid #808080;
}

.swatches {
    display: flex;
    overflow: hidden;
    padding-left: 2px;
    border-top: 1px solid #000;
    border-bottom: 2px solid #d4d0c8;
}

.swatch {
    width: 17px;
    height: 17px;
}

.swatch.none {
    background: #fff;
}

.swatch svg {
    width: 17px;
    height: 17px;
}

.palette-menu {
    height: 10px;
}

.palette .thumb {
    width: 212px;
    height: 16px;
}

/* status bar */

.statusbar {
    display: flex;
    align-items: center;
    height: 28px;
}

.style {
    display: grid;
    grid-template-columns: 72px 1fr;
    width: 114px;
    padding-left: 1px;
}

.opacity {
    width: 75px;
    gap: 4px;
}

.opacity .spin {
    width: 49px;
}

.vline {
    width: 2px;
    height: 26px;
    margin: 0 1px;
    border-left: 1px solid #808080;
    border-right: 1px solid #fff;
}

.layer {
    width: 70px;
    height: 26px;
    font-size: 10px;
    font-weight: bold;
    border-color: #404040 #fff #fff #404040;
}

.message {
    flex: 1;
    padding-left: 2px;
    font-family: 'Liberation Sans', Arial, sans-serif;
    white-space: nowrap;
}

.coords {
    display: grid;
    grid-template-columns: auto 1fr;
    width: 66px;
    padding: 0 2px;
    border-left: 1px solid #808080;
    line-height: 13px;
}

.coords dd {
    text-align: right;
    font-family: 'Liberation Mono', monospace;
    font-size: 12px;
}

.zoom {
    width: 76px;
    gap: 3px;
}

.zoom .spin {
    background: #fff;
}

.zoom .spin input {
    color: #000;
    padding-left: 8px;
}

/* task bar */

.taskbar {
    display: flex;
    align-items: center;
    height: 28px;
    padding: 2px 1px 0 2px;
    border-top: 1px solid #fff;
}

.taskbar svg {
    width: 16px;
    height: 16px;
}

.start, .task {
    height: 22px;
    border: 1px solid;
    border-color: #fff #404040 #404040 #fff;
}

.start {
    width: 54px;
    gap: 2px;
    font-weight: bold;
}

.grip {
    width: 3px;
    height: 18px;
    margin: 0 5px 0 6px;
    border: 1px solid;
    border-color: #fff #808080 #808080 #fff;
}

.task {
    width: 160px;
    margin-right: 3px;
    padding: 0 3px;
    gap: 4px;
    justify-content: flex-start;
}

.task.active {
    border-color: #404040 #fff #fff #404040;
    font-weight: bold;
}

.task span {
    white-space: nowrap;
}

.search {
    display: flex;
    align-items: center;
    margin-left: auto;
}

.search input {
    width: 141px;
    height: 21px;
    padding-left: 5px;
    background: #fff;
}

.search input::placeholder {
    color: #707070;
}

.search button {
    width: 24px;
    height: 21px;
    background: linear-gradient(#eaf4ff, #c4d8ec);
}

.tray {
    display: flex;
    align-items: center;
    gap: 2px;
    width: 157px;
    height: 22px;
    margin-left: 14px;
    padding: 0 8px 0 4px;
    border: 1px solid;
    border-color: #808080 #fff #fff #808080;
}

.chevron {
    font-weight: bold;
}

.tray time {
    margin-left: auto;
    white-space: nowrap;
}
```
